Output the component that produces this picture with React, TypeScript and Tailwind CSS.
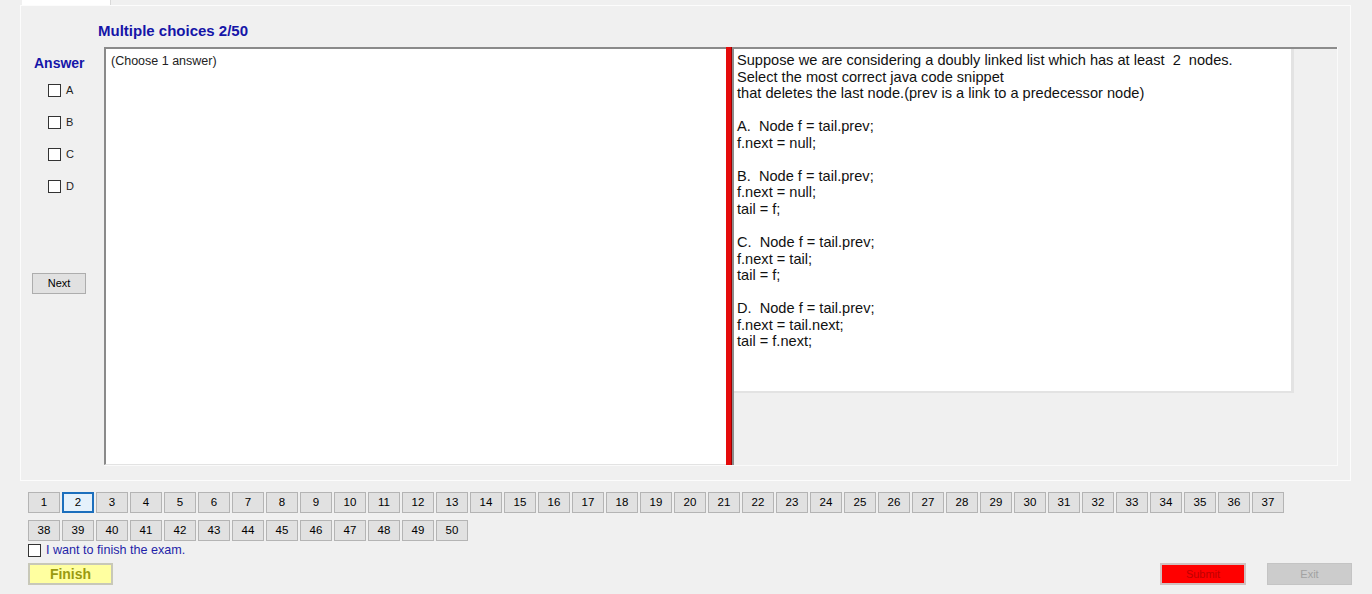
import React from "react";

const font = { fontFamily: '"Liberation Sans", Arial, sans-serif' };

function Box() {
  return <div className="w-[13px] h-[13px] border border-[#333333] bg-white shrink-0" />;
}

const questionLines = [
  "Suppose we are considering a doubly linked list which has at least  2  nodes.",
  "Select the most correct java code snippet",
  "that deletes the last node.(prev is a link to a predecessor node)",
  "",
  "A.  Node f = tail.prev;",
  "f.next = null;",
  "",
  "B.  Node f = tail.prev;",
  "f.next = null;",
  "tail = f;",
  "",
  "C.  Node f = tail.prev;",
  "f.next = tail;",
  "tail = f;",
  "",
  "D.  Node f = tail.prev;",
  "f.next = tail.next;",
  "tail = f.next;",
];

function NumBtn({ n, active }: { n: number; active?: boolean }) {
  return (
    <div
      className={
        active
          ? "w-[32px] h-[21px] border-2 border-[#1c6fbd] bg-[#e5f1fb] flex items-center justify-center text-[11.5px] text-black"
          : "w-[32px] h-[21px] border border-[#b4b4b4] bg-[#e1e1e1] flex items-center justify-center text-[11.5px] text-black"
      }
    >
      {n}
    </div>
  );
}

export default function App() {
  const row1 = Array.from({ length: 37 }, (_, i) => i + 1);
  const row2 = Array.from({ length: 13 }, (_, i) => i + 38);
  return (
    <div className="w-[1372px] h-[594px] bg-[#f0f0f0] overflow-hidden flex flex-col" style={font}>
      {/* tab strip */}
      <div className="h-[5px] flex">
        <div className="ml-[22px] w-[89px] h-[5px] bg-white border-r border-[#d9d9d9]" />
      </div>
      {/* tab panel */}
      <div className="ml-[20px] w-[1331px] h-[476px] border border-[#fcfcfc] bg-[#f0f0f0] flex flex-col">
        <div className="h-[41px] pl-[77px] pt-[17px] text-[15px] font-bold text-[#1515a8] leading-[16px]">
          Multiple choices 2/50
        </div>
        <div className="flex h-[419px]">
          {/* left answer column */}
          <div className="w-[83px] flex flex-col">
            <div className="pl-[13px] pt-[8px] text-[14px] font-bold text-[#1515a8] leading-[16px]">Answer</div>
            <div className="flex flex-col gap-[19px] mt-[13px] pl-[27px]">
              {["A", "B", "C", "D"].map((l) => (
                <div key={l} className="flex items-center gap-[5px] h-[13px]">
                  <Box />
                  <span className="text-[11px] text-[#222]">{l}</span>
                </div>
              ))}
            </div>
            <div className="ml-[11px] mt-[80px] w-[54px] h-[21px] border border-[#adadad] bg-[#e1e1e1] flex items-center justify-center text-[11px] text-black">
              Next
            </div>
          </div>
          {/* splitter container */}
          <div className="w-[1234px] h-[419px] flex border-b border-r border-[#fafafa]">
            <div className="w-[622px] h-full bg-white border-t-2 border-l-2 border-[#8a8a8a] border-b border-b-[#e3e3e3] pl-[5px] pt-[5px] text-[12.5px] text-[#222] leading-[14px]">
              (Choose 1 answer)
            </div>
            <div className="w-[6px] h-full bg-[#e50b0b] border-r border-[#9c0000]" />
            <div className="flex-1 h-full flex flex-col border-t-2 border-l-2 border-[#8c8c8c]">
              <div className="flex">
                <div className="w-[560px] h-[344px] bg-white border-r-[3px] border-b-2 border-[#e3e3e3] pl-[3px] pt-[3px] text-[14.6px] text-[#111] leading-[16.55px] whitespace-pre">
                  {questionLines.map((l, i) => (
                    <div key={i} className="h-[16.55px]">{l}</div>
                  ))}
                </div>
              </div>
            </div>
          </div>
        </div>
      </div>
      {/* bottom navigator */}
      <div className="ml-[28px] mt-[11px] flex flex-col gap-[7px]">
        <div className="flex gap-[2px]">
          {row1.map((n) => (
            <NumBtn key={n} n={n} active={n === 2} />
          ))}
        </div>
        <div className="flex gap-[2px]">
          {row2.map((n) => (
            <NumBtn key={n} n={n} />
          ))}
        </div>
      </div>
      <div className="ml-[28px] mt-[2px] flex items-center gap-[5px] h-[14px]">
        <Box />
        <span className="text-[12.6px] text-[#1f1fa8] leading-[14px]">I want to finish the exam.</span>
      </div>
      <div className="ml-[28px] mr-[20px] mt-[6px] flex items-center">
        <div className="w-[85px] h-[22px] border-2 border-[#c8c8b8] bg-[#ffffa0] flex items-center justify-center text-[14px] font-bold text-[#9a9a10]">
          Finish
        </div>
        <div className="flex-1" />
        <div className="w-[86px] h-[22px] border-2 border-[#d0c0c0] bg-[#ff0000] flex items-center justify-center text-[11px] text-[#c00000]">
          Submit
        </div>
        <div className="ml-[21px] w-[85px] h-[22px] border border-[#c4c4c4] bg-[#cccccc] flex items-center justify-center text-[11px] text-[#a2a2a2]">
          Exit
        </div>
      </div>
    </div>
  );
}
